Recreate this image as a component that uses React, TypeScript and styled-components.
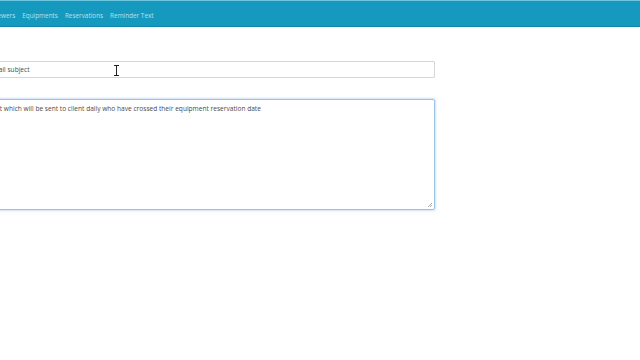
import React from 'react';
import styled, { createGlobalStyle } from 'styled-components';

const GlobalStyle = createGlobalStyle`
  html, body {
    margin: 0;
    padding: 0;
    background: #fff;
    overflow: hidden;
  }
  body {
    font-family: "Open Sans", "DejaVu Sans", sans-serif;
  }
`;

const Page = styled.div`
  width: 640px;
  height: 360px;
  position: relative;
  overflow: hidden;
  background: #fff;
`;

const NavBar = styled.div`
  background: #1699bf;
  border-top: 1px solid #6cc6e0;
  border-bottom: 1px solid #0d86a8;
  display: flex;
  align-items: center;
  padding-top: 3px;
  box-sizing: border-box;
  height: 27px;
`;

const NavList = styled.div`
  display: flex;
  gap: 7px;
  margin-left: -8px;
`;

const NavItem = styled.span`
  color: #b7e0ef;
  font-size: 6.4px;
  white-space: nowrap;
`;

const Form = styled.div`
  display: flex;
  flex-direction: column;
  margin-left: -40px;
  padding-top: 34px;
  width: 475px;
`;

const Input = styled.div`
  height: 15px;
  border: 1px solid #d6d6d6;
  border-radius: 1px;
  display: flex;
  align-items: center;
  padding-left: 28px;
  font-size: 6.6px;
  color: #4a4a4a;
`;

const TextArea = styled.div<{ $focused?: boolean }>`
  margin-top: 21px;
  height: 105px;
  border: 1px solid ${(p) => (p.$focused ? '#9cc3e4' : '#d6d6d6')};
  box-shadow: ${(p) => (p.$focused ? '0 0 2px 1px rgba(120,170,225,0.35)' : 'none')};
  border-radius: 2px;
  padding: 4px 0 0 28px;
  font-size: 6.6px;
  color: #4a4a4a;
  position: relative;
`;

const Grip = styled.svg`
  position: absolute;
  right: 1px;
  bottom: 1px;
`;

const Cursor = styled.svg`
  position: absolute;
  left: 113px;
  top: 65px;
`;

export default function App() {
  return (
    <Page>
      <GlobalStyle />
      <NavBar>
        <NavList>
          <NavItem>Viewers</NavItem>
          <NavItem>Equipments</NavItem>
          <NavItem>Reservations</NavItem>
          <NavItem>Reminder Text</NavItem>
        </NavList>
      </NavBar>
      <Form>
        <Input>Email subject</Input>
        <TextArea $focused>
          Text which will be sent to client daily who have crossed their equipment reservation date
          <Grip width="6" height="6" viewBox="0 0 6 6">
            <path d="M5 1 L1 5 M5 3 L3 5" stroke="#999" strokeWidth="0.8" />
          </Grip>
        </TextArea>
      </Form>
      <Cursor width="7" height="11" viewBox="0 0 7 11">
        <path d="M1 0.5 H6 M3.5 0.5 V10.5 M1 10.5 H6" stroke="#fff" strokeWidth="2.2" />
        <path d="M1 0.5 H6 M3.5 0.5 V10.5 M1 10.5 H6" stroke="#222" strokeWidth="1" />
      </Cursor>
    </Page>
  );
}
